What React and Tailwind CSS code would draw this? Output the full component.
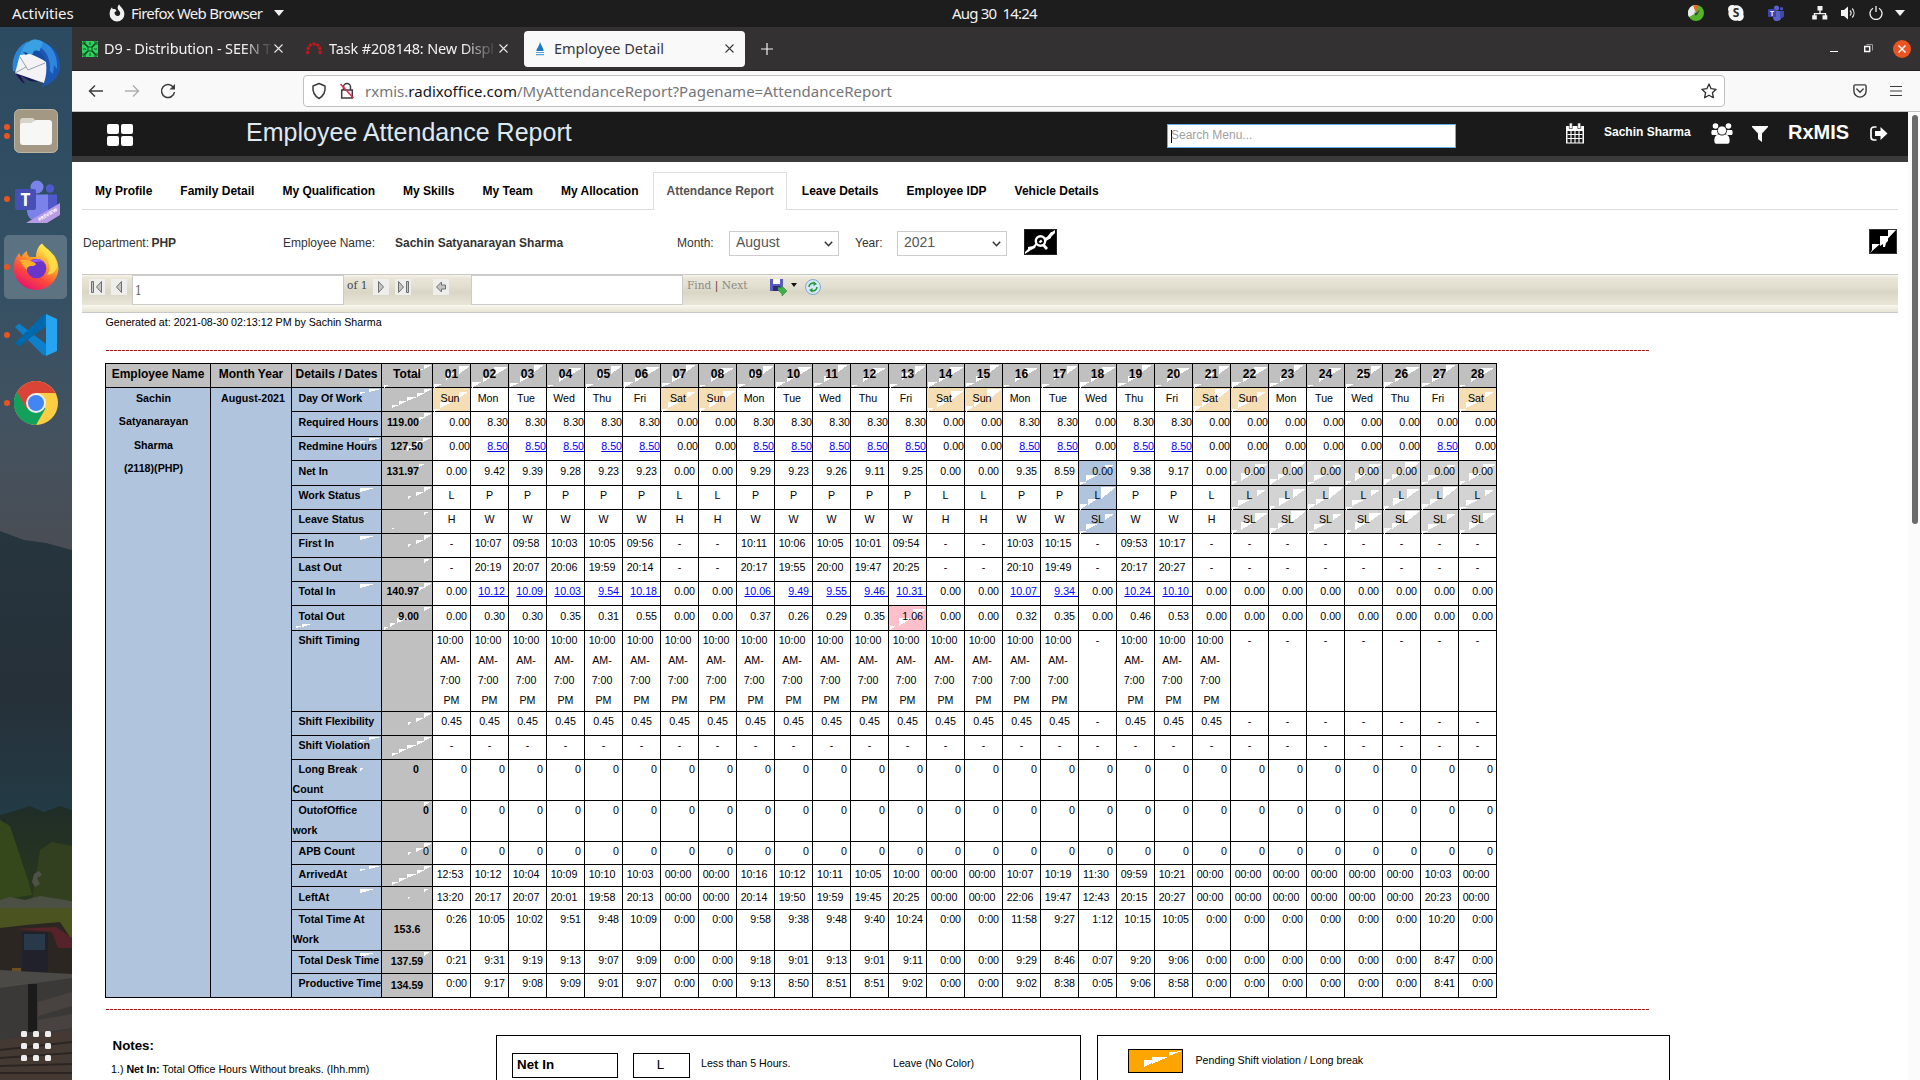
import React from "react";

const ui = "font-['Noto_Sans',sans-serif]";

/* ---------- attendance data ---------- */

const rep = (v, n) => Array(n).fill(v);
const pad = (s, v) => {
  const a = s.split(" ");
  return a.concat(rep(v, 28 - a.length));
};

const days = Array.from({ length: 28 }, (_, i) => String(i + 1).padStart(2, "0"));
const weekday = ["Sun", "Mon", "Tue", "Wed", "Thu", "Fri", "Sat"];
const dayNames = days.map((_, i) => weekday[i % 7]);

const tan = "bg-[#f5deb3]";
const blue = "bg-[#b0c4de]";
const gray = "bg-[#d3d3d3]";

const leaveTint = (i) => (i === 17 ? blue : i > 20 ? gray : "");

const rows = [
  { label: "Day Of Work", h: "h-[24px]", t: "pt-0", total: "", art: "a", tart: "a", data: dayNames, align: "cn", tint: (i) => (i % 7 === 6 || i % 7 === 0 ? tan : "") },
  { label: "Required Hours", h: "h-[25px]", t: "pt-0", total: "119.00", tpos: "r12", tart: "c", data: pad("0.00 8.30 8.30 8.30 8.30 8.30 0.00 0.00 8.30 8.30 8.30 8.30 8.30 0.00 0.00 8.30 8.30 0.00 8.30 8.30", "0.00"), align: "r" },
  { label: "Redmine Hours", h: "h-[24px]", t: "-mt-px", total: "127.50", tpos: "r9", art: "a", tart: "b", data: pad("0.00 _8.50 _8.50 _8.50 _8.50 _8.50 0.00 0.00 _8.50 _8.50 _8.50 _8.50 _8.50 0.00 0.00 _8.50 _8.50 0.00 _8.50 _8.50 0.00 0.00 0.00 0.00 0.00 0.00 _8.50 0.00", "0.00"), align: "r" },
  { label: "Net In", h: "h-[25px]", t: "pt-0", total: "131.97", tpos: "r12", tart: "d", data: pad("0.00 9.42 9.39 9.28 9.23 9.23 0.00 0.00 9.29 9.23 9.26 9.11 9.25 0.00 0.00 9.35 8.59 0.00 9.38 9.17", "0.00"), align: "rn", tint: leaveTint },
  { label: "Work Status", h: "h-[24px]", t: "-mt-px", total: "", art: "b", tart: "e", data: pad("L P P P P P L L P P P P P L L P P L P P", "L"), align: "c", tint: leaveTint },
  { label: "Leave Status", h: "h-[24px]", t: "-mt-px", total: "", tart: "f", data: pad("H W W W W W H H W W W W W H H W W SL W W H", "SL"), align: "c", tint: leaveTint },
  { label: "First In", h: "h-[24px]", t: "-mt-px", total: "", art: "b", tart: "e", data: pad("- 10:07 09:58 10:03 10:05 09:56 - - 10:11 10:06 10:05 10:01 09:54 - - 10:03 10:15 - 09:53 10:17", "-"), align: "cn" },
  { label: "Last Out", h: "h-[24px]", t: "-mt-px", total: "", tart: "g", data: pad("- 20:19 20:07 20:06 19:59 20:14 - - 20:17 19:55 20:00 19:47 20:25 - - 20:10 19:49 - 20:17 20:27", "-"), align: "cn" },
  { label: "Total In", h: "h-[24px]", t: "-mt-px", total: "140.97", tpos: "r12", art: "b", tart: "c", data: pad("0.00 _10.12 _10.09 _10.03 _9.54 _10.18 0.00 0.00 _10.06 _9.49 _9.55 _9.46 _10.31 0.00 0.00 _10.07 _9.34 0.00 _10.24 _10.10", "0.00"), align: "rn" },
  { label: "Total Out", h: "h-[25px]", t: "pt-0", total: "9.00", tpos: "r12", art: "c", tart: "h", data: pad("0.00 0.30 0.30 0.35 0.31 0.55 0.00 0.00 0.37 0.26 0.29 0.35 1.06 0.00 0.00 0.32 0.35 0.00 0.46 0.53", "0.00"), align: "rn", tint: (i) => (i === 12 ? "bg-[#ffc0cb]" : "") },
  { label: "Shift Timing", h: "h-[81px]", t: "-mt-px", total: "", data: [...rep("shift", 17), "-", ...rep("shift", 3), ...rep("-", 7)], align: "c" },
  { label: "Shift Flexibility", h: "h-[24px]", t: "-mt-px", total: "", tart: "e", data: [...rep("0.45", 17), "-", ...rep("0.45", 3), ...rep("-", 7)], align: "c" },
  { label: "Shift Violation", h: "h-[24px]", t: "-mt-px", total: "", art: "a", tart: "a", data: rep("-", 28), align: "c" },
  { label: "Long Break Count", h: "h-[41px]", t: "-mt-px", total: "0", tpos: "r12", art: "d", data: rep("0", 28), align: "rn" },
  { label: "OutofOffice work", h: "h-[41px]", t: "-mt-px", total: "0", tpos: "r2", tart: "g", data: rep("0", 28), align: "rn" },
  { label: "APB Count", h: "h-[23px]", t: "-mt-px", total: "0", tpos: "r2n", tart: "e", data: rep("0", 28), align: "rn" },
  { label: "ArrivedAt", h: "h-[22px]", t: "-mt-px", total: "", art: "a", tart: "a", data: pad("12:53 10:12 10:04 10:09 10:10 10:03 00:00 00:00 10:16 10:12 10:11 10:05 10:00 00:00 00:00 10:07 10:19 11:30 09:59 10:21 00:00 00:00 00:00 00:00 00:00 00:00 10:03", "00:00"), align: "cn" },
  { label: "LeftAt", h: "h-[23px]", t: "pt-0", total: "", art: "b", tart: "f2", data: pad("13:20 20:17 20:07 20:01 19:58 20:13 00:00 00:00 20:14 19:50 19:59 19:45 20:25 00:00 00:00 22:06 19:47 12:43 20:15 20:27 00:00 00:00 00:00 00:00 00:00 00:00 20:23", "00:00"), align: "cn" },
  { label: "Total Time At Work", h: "h-[41px]", t: "-mt-px", total: "153.6", tpos: "m", data: pad("0:26 10:05 10:02 9:51 9:48 10:09 0:00 0:00 9:58 9:38 9:48 9:40 10:24 0:00 0:00 11:58 9:27 1:12 10:15 10:05 0:00 0:00 0:00 0:00 0:00 0:00 10:20", "0:00"), align: "rn" },
  { label: "Total Desk Time", h: "h-[23px]", t: "-mt-px", total: "137.59", tpos: "m", art: "b", tart: "g", data: pad("0:21 9:31 9:19 9:13 9:07 9:09 0:00 0:00 9:18 9:01 9:13 9:01 9:11 0:00 0:00 9:29 8:46 0:07 9:20 9:06 0:00 0:00 0:00 0:00 0:00 0:00 8:47", "0:00"), align: "rn" },
  { label: "Productive Time", h: "h-[24px]", t: "-mt-px", total: "134.59", tpos: "m", data: pad("0:00 9:17 9:08 9:09 9:01 9:07 0:00 0:00 9:13 8:50 8:51 8:51 9:02 0:00 0:00 9:02 8:38 0:05 9:06 8:58 0:00 0:00 0:00 0:00 0:00 0:00 8:41", "0:00"), align: "rn" },
];

/* ---------- stepped white wedges drawn over tinted cells ---------- */

const labelWedges = {
  a: "M68 4h7l-7 2zM77 1h12l-12 3z",
  b: "M68 2h15l-15 4z",
  c: "M4 20h7l-7 2zM10 18h10l-10 3z",
  d: "M68 8h3l-3 3z",
};
const totalWedges = {
  a: "M10 17h7l-7 3zM17 13h8l-8 4zM25 9h10l-10 4zM35 5h8l-8 4zM42 1h8l-8 4z",
  b: "M25 9h9l-9 5zM34 4h9l-9 5zM41 1h8l-8 4z",
  c: "M37 5h6l-6 4zM42 1h8l-8 5z",
  d: "M37 3h6l-6 3z",
  e: "M26 10h4l-4 3zM34 6h8l-8 4zM42 1h8l-8 5z",
  f: "M42 2h5l-5 3zM10 18h2v1h-2z",
  f2: "M42 2h5l-5 3zM26 10h3l-3 2z",
  g: "M42 1h6l-6 4z",
  h: "M42 1h8l-8 4zM2 21h5l-5 3zM8 17h6l-6 4zM15 12h12l-12 5z",
};
const headWedges = [
  "M26 2h11l-11 8zM13 9h9l-9 7zM1 20h8l-8 4z",
  "M23 3h14l-14 9zM12 13h9l-9 5zM1 18h10l-10 6z",
  "M25 1h10l-10 7zM11 12h12l-12 6zM1 19h9l-9 4z",
  "M22 4h13l-13 8zM12 12h9l-9 6zM1 21h6l-6 2z",
];
const bodyWedges = [
  "M24 3h13l-13 9zM10 12h13l-13 8zM1 20h6l-6 4z",
  "M22 1h15l-15 12zM9 13h9l-9 6zM1 18h8l-8 6z",
  "M26 4h9l-9 6zM7 14h12l-12 6zM1 21h7l-7 3z",
];

function Wedges({ d, w }) {
  if (!d) return null;
  return (
    <svg className="absolute left-0 top-0" width={w} height="24" viewBox={`0 0 ${w} 24`} shapeRendering="crispEdges">
      <path d={d} fill="#fff" />
    </svg>
  );
}

function DayCell({ row, value, i }) {
  const tint = row.tint ? row.tint(i) : "";
  const link = value[0] === "_";
  const text = link ? value.slice(1) : value;
  const right = row.align[0] === "r";
  const nb = row.align[1] === "n" && text !== "-" ? "\u00a0" : "";
  return (
    <div className={`relative w-[38px] shrink-0 border-r border-b border-black ${tint}`}>
      {tint && <Wedges d={bodyWedges[(i + row.label.length) % 3]} w={37} />}
      <div className={`relative whitespace-nowrap ${row.t} ${right ? "text-right" : "text-center"}`}>
        {text === "shift" ? (
          <>
            10:00&nbsp;<br />AM-&nbsp;<br />7:00&nbsp;<br />PM
          </>
        ) : link ? (
          <a className="text-[#0000ff] underline">{text}{nb}</a>
        ) : (
          <>{text}{nb}</>
        )}
      </div>
    </div>
  );
}

const totalPos = {
  r12: "text-right pr-[13px] font-bold",
  r9: "text-right pr-[9px] font-bold",
  r2: "text-right pr-[3px] font-bold",
  r2n: "text-right pr-[3px]",
  m: "text-center font-bold -mt-[2px]",
};

function ReportTable() {
  return (
    <div className="flex w-[1392px] flex-col border-l border-t border-black text-[10.667px] leading-[20px] text-black">
      <div className="flex h-[24px] bg-[#c0c0c0] text-center text-[12px] font-bold leading-[21px]">
        <div className="w-[105px] border-r border-b border-black">Employee Name</div>
        <div className="w-[81px] border-r border-b border-black">Month Year</div>
        <div className="w-[90px] border-r border-b border-black whitespace-nowrap">Details / Dates</div>
        <div className="relative w-[51px] border-r border-b border-black">
          <Wedges d="M42 1h8l-8 4zM35 5h7l-7 4zM2 21h5l-5 3z" w={50} />
          <span className="relative">Total</span>
        </div>
        {days.map((d, i) => (
          <div key={d} className="relative w-[38px] border-r border-b border-black">
            <Wedges d={headWedges[i % 4]} w={37} />
            <span className="relative">{d}</span>
          </div>
        ))}
      </div>
      <div className="flex">
        <div className="w-[105px] border-r border-b border-black bg-[#b0c4de] pr-[9px] text-center font-bold leading-[23.33px]">
          <div className="-mt-[1px]">Sachin<br />Satyanarayan<br />Sharma<br />(2118)(PHP)</div>
        </div>
        <div className="w-[81px] border-r border-b border-black bg-[#b0c4de] pl-[4px] text-center font-bold">August-2021</div>
        <div className="flex flex-col">
          {rows.map((row) => (
            <div key={row.label} className={`flex ${row.h}`}>
              <div className="relative w-[90px] shrink-0 border-r border-b border-black bg-[#b0c4de] font-bold">
                <Wedges d={labelWedges[row.art]} w={89} />
                <div className={`relative -mr-[2px] pl-[0.500px] indent-[6px] ${row.t}`}>{row.label}</div>
              </div>
              <div className={`relative w-[51px] shrink-0 border-r border-b border-black bg-[#c0c0c0] ${row.tpos === "m" ? "flex flex-col justify-center" : ""}`}>
                <Wedges d={totalWedges[row.tart]} w={50} />
                {row.total && <div className={`relative ${totalPos[row.tpos]} ${row.tpos === "m" ? "" : row.t}`}>{row.total}</div>}
              </div>
              {row.data.map((v, i) => (
                <DayCell key={i} row={row} value={v} i={i} />
              ))}
            </div>
          ))}
        </div>
      </div>
    </div>
  );
}

/* ---------- desktop shell ---------- */

function TopBar() {
  return (
    <div className={`flex h-[27px] items-center bg-[#1d1d1d] pb-px text-[15px] leading-[26px] text-[#f2f2f2] ${ui}`}>
      <div className="ml-[12px] w-[97px] shrink-0 tracking-[-0.1px]">Activities</div>
      <svg width="16" height="18" viewBox="0 0 16 18" className="shrink-0">
        <path d="M8 17.5A7.4 7.4 0 0 1 .6 10C.6 7 1.600 4.800 3 3.200L3.600 5 6.200 4.900 7.500 7 5.500 8.300C5.500 11 7 12 8.700 12 10.700 12 11.700 10 11 8.200 10.300 6.600 8.800 5.800 8.600 4 8.500 2.400 9.300 1.200 10.300.5 10.600 2.500 15.400 4.800 15.400 10A7.400 7.400 0 0 1 8 17.500z" fill="#f0f0f0" />
      </svg>
      <div className="ml-[6px] w-[143px] shrink-0 whitespace-nowrap tracking-[-0.73px]">Firefox Web Browser</div>
      <svg width="10" height="6" viewBox="0 0 10 6"><path d="M0 0h10L5 6z" fill="#f2f2f2" /></svg>
      <div className="ml-[668px] w-[740px] shrink-0 whitespace-pre tracking-[-0.8px]">Aug 30  14:24</div>
      <div className="flex items-center">
        <svg width="16" height="16" viewBox="0 0 16 16" className="-ml-[4px]">
          <circle cx="8" cy="8" r="8" fill="#54b32a" />
          <path d="M8 8V0A8 8 0 0 0 1 12z" fill="#e9e9e9" />
          <path d="M8 8 5 .6A8 8 0 0 1 9.500.2z" fill="#f0642a" />
          <path d="M6.500 7 8 8l4-3.500L9 10l-2 .5z" fill="#444" />
        </svg>
        <svg width="16" height="16" viewBox="0 0 16 16" className="ml-[24px]">
          <path d="M0 4.500A4.500 4.500 0 0 1 6.500.4 7.500 7.500 0 0 1 15.300 9.500 4.500 4.500 0 0 1 9.500 15.600 7.500 7.500 0 0 1 .6 6.500z" fill="#f5f5f5" />
          <text x="8" y="12.200" textAnchor="middle" fontSize="12" letterSpacing="0" fontWeight="bold" fontFamily="Noto Sans" fill="#2a2a2a">S</text>
        </svg>
        <svg width="16" height="16" viewBox="0 0 16 16" className="ml-[24px]">
          <circle cx="8.500" cy="3" r="2.600" fill="#5b62c9" /><circle cx="13.500" cy="3.700" r="1.700" fill="#4a50b5" />
          <path d="M5 6h8v5a4 4 0 0 1-8 2z" fill="#5b62c9" /><path d="M12 6h4v4a2.500 2.500 0 0 1-4 2.500z" fill="#4048a8" />
          <rect x="0" y="4" width="8" height="8" rx="1" fill="#3c45b0" />
          <text x="4" y="10.500" textAnchor="middle" fontSize="7" fontWeight="bold" fontFamily="Noto Sans" fill="#e8e8ff">T</text>
        </svg>
        <svg width="16" height="14" viewBox="0 0 16 14" className="ml-[28px]" fill="#f2f2f2">
          <path d="M5.500 0h5v4.500h-5zM7.300 4h1.400v3h5.500v3h-1.300V8.200H3.100V10H1.800V7h5.500zM.2 9.300h4.600v4.200H.2zM10.500 9.300h4.800v4.200h-4.800z" />
        </svg>
        <svg width="16" height="14" viewBox="0 0 16 14" className="ml-[13px]">
          <path d="M0 4h3l4-3.500v13L3 10H0z" fill="#f2f2f2" />
          <path d="M9 4.500c1.300 1.400 1.300 3.600 0 5M11.200 2.500c2.400 2.600 2.400 6.400 0 9" fill="none" stroke="#e5e5e5" strokeWidth="1.200" />
        </svg>
        <svg width="14" height="14" viewBox="0 0 14 14" className="ml-[12px]" fill="none" stroke="#f2f2f2" strokeWidth="1.300">
          <path d="M4 2.300A6 6 0 1 0 10 2.300M7 0v6" />
        </svg>
        <svg width="10" height="6" viewBox="0 0 10 6" className="ml-[12px]"><path d="M0 0h10L5 6z" fill="#f2f2f2" /></svg>
      </div>
    </div>
  );
}

function Wallpaper() {
  return (
    <svg className="absolute inset-0" width="72" height="1053" viewBox="0 27 72 1053" preserveAspectRatio="none">
      <defs>
        <linearGradient id="sky" x1="0" y1="0" x2="0" y2="1">
          <stop offset="0" stopColor="#2c4a60" /><stop offset=".45" stopColor="#335064" />
          <stop offset=".75" stopColor="#43525f" /><stop offset="1" stopColor="#4b4c53" />
        </linearGradient>
        <linearGradient id="hill" x1="0" y1="0" x2="0" y2="1">
          <stop offset="0" stopColor="#26353e" /><stop offset=".5" stopColor="#263038" />
          <stop offset=".85" stopColor="#233b46" /><stop offset="1" stopColor="#274349" />
        </linearGradient>
        <linearGradient id="tree" x1="0" y1="0" x2="0" y2="1">
          <stop offset="0" stopColor="#1f2d28" /><stop offset="1" stopColor="#2b3a1a" />
        </linearGradient>
      </defs>
      <rect y="27" width="72" height="540" fill="url(#sky)" />
      <path d="M0 531 24 540 46 543 72 550V860H0z" fill="url(#hill)" />
      <path d="M0 815 14 811 30 806 44 812 60 806 72 810V920H0z" fill="url(#tree)" />
      <path d="M0 820 10 826 18 850 28 880 32 895 0 900z" fill="#35481c" />
      <path d="M40 850 52 842 72 846V900H32z" fill="#33401f" />
      <path d="M0 905h72v32H0z" fill="#4b5320" />
      <path d="M0 900 10 897 25 900 40 896 72 901V908H0z" fill="#4c5044" />
      <path d="M34 874l5-3 3 4-5 3 3 6-5 3-3-5z" fill="#4f5347" />
      <path d="M0 928 26 925 60 922 72 940V980H0z" fill="#2c2622" />
      <path d="M14 929 56 927 72 938V948H58L52 932z" fill="#57232b" />
      <path d="M22 932h26v43H22z" fill="#20212a" /><path d="M24 934h21v16H24z" fill="#28394a" />
      <path d="M12 968h9v8h-9z" fill="#6b4f22" />
      <path d="M0 970 72 974V982L0 1002z" fill="#4c4a46" />
      <path d="M0 988 72 978V1080H0z" fill="#3b3938" />
      <path d="M28 984h9v48h-9z" fill="#1b1b1c" />
      <path d="M38 1002 72 992v14l-34 10zM38 1020l34-6v14l-34 5z" fill="#484340" />
      <path d="M0 1040 72 1030V1080H0z" fill="#453a33" />
      <path d="M0 1050l72-8M0 1058l72-5M0 1066l72-2M0 1073h72" stroke="#2a2522" strokeWidth="2" />
    </svg>
  );
}

function DockItem({ dots = 1, active, children }) {
  return (
    <div className={`relative mx-[4px] flex h-[64px] items-center justify-center rounded-[5px] ${active ? "bg-white/20" : ""}`}>
      <div className="absolute left-0 top-0 flex h-[64px] flex-col justify-center gap-[3px]">
        {Array.from({ length: dots }, (_, i) => (
          <span key={i} className="size-[6px] rounded-full bg-[#e95420]" />
        ))}
      </div>
      {children}
    </div>
  );
}

function Dock() {
  return (
    <div className="relative flex w-[72px] shrink-0 flex-col gap-[4px] border-r border-[#27343e] pt-[4px]">
      <Wallpaper />
      <DockItem dots={0}>
        <svg width="48" height="48" viewBox="0 0 48 48">
          <path d="M16 2C4 8-1 20 1 32L8 36 10 20z" fill="#2a86d6" />
          <path d="M20 1C26 0 30 2 32 4 42 6 49 18 48 30 46 40 38 46 29 48l4-5V22L22 14 14 10z" fill="#1d57b4" />
          <path d="M28 2C40 5 46 16 45 30l-3-4-1 9-3-3-1 6C40 24 36 12 27 8z" fill="#2f86dc" />
          <path d="M20 1c5-1 8 0 11 2L26 16C20 19 14 17 8 16 10 9 14 3 20 1z" fill="#3aa0e4" />
          <path d="M22 12C28 10 32 16 34 24L20 16z" fill="#164ea6" />
          <path d="M2 32C6 38 9 43 13 45L8 36 18 42 26 43z" fill="#1f1254" />
          <path d="M8 16 18 15C24 17 30 20 34 23 35 31 34 38 32 44L3 34C5 28 6 22 8 16z" fill="#f3f3f6" />
          <path d="M8 18 16 31 33 24M3 34l11-6" fill="none" stroke="#98a2ad" strokeWidth="1" />
          <path d="M11 13l5 1-2 2z" fill="#123b7c" />
        </svg>
      </DockItem>
      <DockItem dots={2}>
        <svg width="44" height="44" viewBox="0 0 44 44">
          <rect x=".5" y=".5" width="43" height="43" rx="5" fill="#a29883" stroke="#bdb5a3" />
          <path d="M6 12a3 3 0 0 1 3-3h10l3 3h12v6H6z" fill="#d8d4c9" />
          <path d="M6 17c0-2 1-3 3-3h8l5-3h13a3 3 0 0 1 3 3v19a3 3 0 0 1-3 3H9a3 3 0 0 1-3-3z" fill="#f7f7f6" />
        </svg>
      </DockItem>
      <DockItem>
        <svg width="46" height="44" viewBox="0 0 46 44" className="ml-[2px] mt-[5px] overflow-visible">
          <circle cx="23" cy="7" r="6.500" fill="#7b83eb" /><circle cx="36" cy="8.500" r="4.200" fill="#5059c9" />
          <path d="M33 14.500h10V29a8 8 0 0 1-10 4z" fill="#5059c9" />
          <path d="M13 14.500h21V31a10.500 10.500 0 0 1-21 0z" fill="#7b83eb" />
          <rect x="1" y="9" width="21" height="21" rx="2" fill="#4650b4" />
          <text x="11.500" y="25.500" textAnchor="middle" fontSize="17" fontWeight="bold" fontFamily="Noto Sans" fill="#fff">T</text>
          <path d="M12 43 46 23V35L33 43z" fill="#b79be6" />
          <text x="0" y="0" transform="translate(25.500 41.500) rotate(-31)" fontSize="4.800" fontWeight="bold" fontFamily="Noto Sans" fill="#fff">PREVIEW</text>
        </svg>
      </DockItem>
      <DockItem active>
        <svg width="46" height="48" viewBox="0 0 46 48">
          <defs>
            <linearGradient id="fx" x1=".8" y1=".1" x2=".3" y2="1">
              <stop offset="0" stopColor="#fff44f" /><stop offset=".35" stopColor="#ffa22b" />
              <stop offset=".65" stopColor="#ff4b3a" /><stop offset="1" stopColor="#e3136e" />
            </linearGradient>
          </defs>
          <path d="M29 .5C32 6 45 10 45.500 26A22.500 22.500 0 0 1 .7 27C.5 19 3 14 6 10l2 4c2-3 4-5 6-6 0 3 1 5 3 6h6c0-5 2-11 6-13.500z" fill="url(#fx)" />
          <circle cx="23.500" cy="25.500" r="9.800" fill="#6a35c9" />
          <path d="M17 19a10 10 0 0 1 15 1c-3-2-6-2-8-1z" fill="#9059ff" />
          <path d="M7 17c3-1 11 0 15 3 2 1 0 3-3 3-4 0-5 2-5 4-3-3-5-5-7-10z" fill="#ffb02e" />
          <path d="M29 1C26 8 35 12 36 22c1 4 0 7-2 10 4 0 9-3 10-8C44 12 33 8 29 1z" fill="#ffe14a" opacity=".85" />
        </svg>
      </DockItem>
      <DockItem>
        <svg width="42" height="42" viewBox="0 0 42 42">
          <path d="M0 13 4 9.500 31 30V41.500L28 41z" fill="#0d7fcb" />
          <path d="M0 29 4 32.500 31 12V.5L28 1z" fill="#0069ad" />
          <path d="M31 0 42 5V37L31 42z" fill="#26a4f2" />
        </svg>
      </DockItem>
      <DockItem>
        <svg width="44" height="44" viewBox="0 0 44 44">
          <circle cx="22" cy="22" r="22" fill="#ffcd42" />
          <path d="M22 22 2.900 11A22 22 0 0 0 22 44l9.500-16.500z" fill="#12a05b" />
          <path d="M22 12h19.500A22 22 0 0 0 2.900 11l9.500 16.500z" fill="#da4437" />
          <circle cx="22" cy="22" r="10" fill="#f1f1f1" /><circle cx="22" cy="22" r="8" fill="#4285f4" />
        </svg>
      </DockItem>
      <div className="relative mx-auto mt-auto mb-[19px] grid grid-cols-3 gap-[6px]">
        {rep(0, 9).map((_, i) => (
          <span key={i} className="size-[6px] rounded-[1.500px] bg-[#eeeeee]" />
        ))}
      </div>
    </div>
  );
}

function Cross({ color = "#e8e8e8" }) {
  return (
    <svg width="9" height="9" viewBox="0 0 9 9" className="shrink-0">
      <path d="M.5.5l8 8M8.500.5l-8 8" stroke={color} strokeWidth="1.100" />
    </svg>
  );
}

function TabStrip() {
  return (
    <div className={`flex h-[44px] items-center border-b border-[#232122] bg-[#333132] text-[14.500px] text-[#f2f2f2] ${ui}`}>
      <svg width="16" height="16" viewBox="0 0 16 16" className="ml-[10px] shrink-0">
        <rect width="16" height="16" fill="#2fd160" />
        <path d="M2 2l4 4M14 2l-4 4M2 14l4-4M14 14l-4-4" stroke="#0a3d18" strokeWidth="1.600" />
        <path d="M8 1v3M8 12v3M1 8h3M12 8h3M6 6h4v4H6zM1 4V1h3M12 1h3v3M1 12v3h3M12 15h3v-3" stroke="#10531f" strokeWidth="1" fill="none" />
      </svg>
      <div className="ml-[6px] mt-px w-[169px] shrink-0 whitespace-nowrap tracking-[-0.15px] [mask-image:linear-gradient(90deg,#000_82%,transparent_100%)]">D9 - Distribution - SEEN T</div>
      <div className="ml-[1px]"><Cross /></div>
      <svg width="16" height="13" viewBox="0 0 16 13" className="ml-[23px] shrink-0" fill="none">
        <path d="M2 12C1 5 4 2 8 2s7 3 6 10" stroke="#c9141c" strokeWidth="3" strokeDasharray="3 1" />
      </svg>
      <div className="ml-[7px] mt-px w-[168px] shrink-0 whitespace-nowrap tracking-[-0.15px] [mask-image:linear-gradient(90deg,#000_80%,transparent_100%)]">Task #208148: New Displ</div>
      <div className="ml-[2px]"><Cross /></div>
      <div className="ml-[16px] flex h-[36px] w-[221px] shrink-0 items-center rounded-[4px] bg-[#f9f9fa] text-[#37373d]">
        <svg width="10" height="14" viewBox="0 0 10 14" className="ml-[11px]">
          <path d="M5 0C6 3 9 7 8.500 9H1.500C1 7 4 5 5 0z" fill="#1d78c1" /><path d="M1 10h8v1H1zM1 12h8v1.300H1z" fill="#5aa0d8" />
        </svg>
        <div className="ml-[9px] mt-px w-[171px]">Employee Detail</div>
        <Cross color="#3a3a3a" />
      </div>
      <svg width="12" height="12" viewBox="0 0 12 12" className="ml-[16px] shrink-0"><path d="M6 0v12M0 6h12" stroke="#f2f2f2" strokeWidth="1.200" /></svg>
      <div className="ml-auto flex items-center">
        <div className="mt-[5px] h-px w-[8px] bg-white" />
        <svg width="9" height="9" viewBox="0 0 9 9" className="ml-[26px] mr-[20px]" fill="none">
          <path d="M.7 2.500h5v5h-5z" stroke="#fff" strokeWidth="1.400" /><path d="M2.500.5h6v6" stroke="#999" />
        </svg>
        <div className="mr-[9px] flex size-[18px] items-center justify-center rounded-full bg-[#e95420]">
          <svg width="8" height="8" viewBox="0 0 8 8"><path d="M.5.5l7 7M7.500.5l-7 7" stroke="#fff" strokeWidth="1.500" /></svg>
        </div>
      </div>
    </div>
  );
}

function AddressBar() {
  return (
    <div className="flex h-[41px] items-center border-b border-[#c3c3c4] bg-[#f9f9fa]">
      <svg width="90" height="18" viewBox="0 0 90 18" className="ml-[16px] shrink-0" fill="none" strokeWidth="1.500">
        <path d="M15 9H1.500M7 3.500 1.500 9 7 14.500" stroke="#3c3c3e" />
        <path d="M37 9h13.500M45 3.500 50.500 9 45 14.500" stroke="#b0b0b2" />
        <path d="M85.500 5.500A6.500 6.500 0 1 0 86.500 10" stroke="#3c3c3e" /><path d="M87 2v5.500h-5.500z" fill="#3c3c3e" />
      </svg>
      <div className="ml-[125px] flex h-[32px] w-[1422px] shrink-0 items-center rounded-[4px] border border-[#c0c0c3] bg-white">
        <svg width="16" height="18" viewBox="0 0 16 18" className="ml-[7px]" fill="none" stroke="#3c3c3e" strokeWidth="1.500">
          <path d="M8 1.500 14 4c.6 5-1 9.500-6 12.500C3 13.500 1.400 9 2 4z" strokeLinejoin="round" />
        </svg>
        <svg width="16" height="18" viewBox="0 0 16 18" className="ml-[12px]" fill="none">
          <path d="M4.500 8V5a3.500 3.500 0 0 1 7 0v3M2.700 8h10.600v8H2.700z" stroke="#3c3c3e" strokeWidth="1.500" />
          <path d="M1.500 2l13 14" stroke="#e22850" strokeWidth="1.500" />
        </svg>
        <div className={`ml-[10px] text-[15px] tracking-[0.02px] text-[#75757a] ${ui}`}>
          rxmis.<span className="text-[#15141a]">radixoffice.com</span>/MyAttendanceReport?Pagename=AttendanceReport
        </div>
        <svg width="16" height="16" viewBox="0 0 16 16" className="ml-auto mr-[7px]" fill="none" stroke="#2c2c2e" strokeWidth="1.300" strokeLinejoin="round">
          <path d="M8 1l2.100 4.700 5 .6-3.700 3.400 1 5L8 12.200 3.600 14.700l1-5L.9 6.300l5-.6z" />
        </svg>
      </div>
      <svg width="14" height="14" viewBox="0 0 14 14" className="ml-auto shrink-0" fill="none" stroke="#3c3c3e" strokeWidth="1.400">
        <path d="M2.200.9h9.600c.8 0 1.300.5 1.300 1.300V7a6.100 6.100 0 0 1-12.200 0V2.200C.9 1.400 1.400.9 2.200.9z" /><path d="M3.800 5 7 8.200 10.200 5" strokeLinecap="round" />
      </svg>
      <svg width="12" height="12" viewBox="0 0 12 12" className="ml-[23px] mr-[18px] shrink-0"><path d="M0 1.500h12M0 6h12M0 10.500h12" stroke="#3c3c3e" strokeWidth="1.200" /></svg>
    </div>
  );
}

/* ---------- page ---------- */

function SiteHeader() {
  return (
    <div className="flex h-[50px] w-[1836px] border-b-[6px] border-[#3a3a3a] bg-[#1a1a1a] text-white">
      <svg width="26" height="22" viewBox="0 0 26 22" className="ml-[35px] mt-[12px] shrink-0" fill="#fff">
        <rect width="12" height="10" rx="2" /><rect x="14" width="12" height="10" rx="2" />
        <rect y="12" width="12" height="10" rx="2" /><rect x="14" y="12" width="12" height="10" rx="2" />
      </svg>
      <div className="ml-[113px] w-[921px] shrink-0 whitespace-nowrap text-[25px] leading-[40px] tracking-[0.02px] text-[#dfe9f3]">Employee Attendance Report</div>
      <div className="mt-[12px] flex h-[24px] w-[289px] shrink-0 border border-[#66afe9] bg-white pl-[3px] text-[12px] leading-[20px] text-[#a0a0a0]">
        <span className="mt-[5px] -mr-px h-[13px] w-px bg-black" />
        <span>Search Menu...</span>
      </div>
      <svg width="20" height="21" viewBox="0 0 20 21" className="ml-[109px] mt-[11px] shrink-0">
        <path d="M1 3h18v17.500H1z" fill="#fff" />
        <path d="M2.500 8h15v11.500h-15z" fill="#1a1a1a" />
        <path d="M2.500 11.500h15M2.500 15.500h15M6 8v12M10 8v12M14 8v12" stroke="#fff" strokeWidth="1.100" />
        <path d="M4.300 0h3v5.500h-3zM12.700 0h3v5.500h-3z" fill="#fff" stroke="#1a1a1a" strokeWidth=".6" />
      </svg>
      <div className="ml-[19px] w-[107px] shrink-0 text-[12px] font-bold leading-[40px]">Sachin Sharma</div>
      <svg width="22" height="21" viewBox="0 0 22 21" className="mt-[11px] shrink-0" fill="#fff">
        <circle cx="4.500" cy="3" r="2.800" /><circle cx="17.500" cy="3" r="2.800" />
        <path d="M1 7h6.500l-1 5H1.500C.2 12 0 8.500 1 7zM21 7h-6.500l1 5h5c1.300 0 1.500-3.500.5-5z" />
        <path d="M6.500 11.500h9c3 1.500 3.500 5 3 7.500-.2 1.200-1 1.800-2 1.800h-11c-1 0-1.800-.6-2-1.800-.5-2.500 0-6 3-7.500z" />
        <circle cx="11" cy="7.500" r="4.600" stroke="#1a1a1a" strokeWidth=".9" />
      </svg>
      <svg width="16" height="16" viewBox="0 0 16 16" className="ml-[19px] mt-[14px] shrink-0" fill="#fff"><path d="M0 0h16v1L10 7.500V16l-4-3V7.500L0 1z" /></svg>
      <div className="ml-[20px] w-[82px] shrink-0 text-[20px] font-bold leading-[41px]">RxMIS</div>
      <svg width="18" height="15" viewBox="0 0 18 15" className="mt-[14px] shrink-0">
        <path d="M6.500 1H4a3 3 0 0 0-3 3v7a3 3 0 0 0 3 3h2.500" fill="none" stroke="#fff" strokeWidth="1.700" />
        <path d="M5 5h5.500V1L17.500 7.500 10.500 14v-4H5z" fill="#fff" />
      </svg>
    </div>
  );
}

const navTabs = ["My Profile", "Family Detail", "My Qualification", "My Skills", "My Team", "My Allocation", "Attendance Report", "Leave Details", "Employee IDP", "Vehicle Details"];

function PageTabs() {
  return (
    <div className="ml-[10px] mt-[10px] flex h-[38px] w-[1816px] border-b border-[#ddd] text-[12px] font-bold leading-[36px]">
      {navTabs.map((t) =>
        t === "Attendance Report" ? (
          <div key={t} className="-mb-px ml-px mr-px h-[38px] border border-b-0 border-[#ddd] bg-white px-[12px] text-[#555] ">{t}</div>
        ) : (
          <div key={t} className="ml-px mr-[1px] mt-px px-[13px] text-black first:ml-0">{t}</div>
        )
      )}
    </div>
  );
}

function SelectBox({ value }) {
  return (
    <div className="flex h-[25px] w-[110px] shrink-0 items-center border border-[#ccc] bg-white pl-[6px] pr-[5px] text-[14px] leading-[20px] text-[#555]">
      <span className="-mt-[3px]">{value}</span>
      <svg width="9" height="6" viewBox="0 0 9 6" className="ml-auto"><path d="M.8.8 4.500 4.700 8.200.8" fill="none" stroke="#333" strokeWidth="1.500" /></svg>
    </div>
  );
}

function Filters() {
  return (
    <div className="ml-[11px] mt-[19px] flex h-[26px] text-[12px] leading-[29px] text-[#333]">
      <div className="w-[200px] shrink-0">Department: <b className="-ml-[1px]">PHP</b></div>
      <div className="w-[112px] shrink-0">Employee Name:</div>
      <div className="w-[282px] shrink-0 font-bold">Sachin Satyanarayan Sharma</div>
      <div className="w-[52px] shrink-0">Month:</div>
      <div className="mt-[2px]"><SelectBox value="August" /></div>
      <div className="ml-[16px] w-[42px] shrink-0">Year:</div>
      <div className="mt-[2px]"><SelectBox value="2021" /></div>
      <svg width="33" height="26" viewBox="0 0 33 26" className="ml-[17px] shrink-0">
        <rect x=".5" y=".5" width="32" height="25" stroke="#222" />
        <circle cx="16.500" cy="12" r="4.700" fill="none" stroke="#fff" strokeWidth="2.400" />
        <path d="M19 15.500l4 4.500" stroke="#fff" strokeWidth="2.800" />
        <path d="M31 1v3L27 8v1l-5 3-2-3 3-1 4-5h1zM13 15l-2 4-4 2-6 4V23l3-3v-2l5-1 3-3z" fill="#fff" />
        <path d="M14.500 13l2.500-2.500 1.500 2-2 1.500z" fill="#fff" />
      </svg>
      <svg width="28" height="25" viewBox="0 0 28 25" className="ml-[812px] shrink-0">
        <rect x=".5" y=".5" width="27" height="24" stroke="#333" />
        <path d="M19 1h8L19 9.500zM11 7h8v5l-2 2-1 4h-2v-3l-3 2zM3 15h8L1 24l2-3z" fill="#fff" />
      </svg>
    </div>
  );
}

function ToolGlyph({ d, ml }) {
  return (
    <svg width="16" height="16" viewBox="0 0 16 16" className={`mt-[4px] shrink-0 ${ml}`}>
      <rect width="16" height="16" fill="#eeeeec" />
      <path d={d} fill="#c4c4c4" stroke="#6e6e6e" />
    </svg>
  );
}

function ReportToolbar() {
  return (
    <div className="ml-[10px] mt-[19px] h-[39px] w-[1816px] border-y border-[#c9c9c6] bg-[#ece9d8] font-['DejaVu_Serif_Condensed','DejaVu_Serif',serif] text-[11.800px] leading-[20px] text-[#444]">
      <div className="flex h-[30px] bg-[linear-gradient(#f6f3e8_0,#e8e5d6_12%,#e3e0d1_35%,#d9d6c6_58%,#e0ddce_75%,#e9e6d8_100%)]">
        <ToolGlyph ml="ml-[7px]" d="M2.500 2.500h2v11h-2zM12.500 2.500v11L7.500 8z" />
        <ToolGlyph ml="ml-[6px]" d="M10.500 2.500v11L5.500 8z" />
        <div className="ml-[5px] w-[212px] shrink-0 border border-[#ccc] bg-white pl-[2px] text-[12px] leading-[30px] text-[#666]">1</div>
        <div className="ml-[3px] w-[26px] shrink-0 whitespace-nowrap">of 1</div>
        <ToolGlyph ml="" d="M5.500 2.500v11l5-5.500z" />
        <ToolGlyph ml="ml-[6px]" d="M3.500 2.500v11l5-5.500zM11.500 2.500h2v11h-2z" />
        <ToolGlyph ml="ml-[22px]" d="M3.500 8l5-5v3h4v4h-4v3z" />
        <div className="ml-[22px] w-[212px] shrink-0 border border-[#ccc] bg-white" />
        <div className="ml-[4px] w-[63px] shrink-0 whitespace-pre text-[#8a8a86]">Find <span className="text-[#5a3a2a]">|</span> Next</div>
        <svg width="17" height="17" viewBox="0 0 17 17" className="ml-[20px] mt-[4px] shrink-0">
          <path d="M0 0h13v12H0z" fill="#5a5bc0" /><path d="M3 0h7v5H3z" fill="#fff" /><path d="M3 7h7v5H3z" fill="#2c2d70" />
          <path d="M8 8l3 1 1-2 5 5-5 5v-2l-4-4z" fill="#3fae49" stroke="#1f7c2a" strokeWidth=".5" />
        </svg>
        <svg width="6" height="4" viewBox="0 0 6 4" className="ml-[4px] mt-[8px]"><path d="M0 0h6L3 4z" fill="#111" /></svg>
        <svg width="16" height="16" viewBox="0 0 16 16" className="ml-[8px] mt-[4px] shrink-0">
          <circle cx="8" cy="8" r="7.500" fill="#d5e9f8" stroke="#7fa8cf" />
          <path d="M4 8c0-3 3-4.500 5-3.500M12 8c0 3-3 4.500-5 3.500" fill="none" stroke="#2c9b3a" strokeWidth="1.600" />
          <path d="M8.500 2.200 12 5 8.500 7zM7.500 13.800 4 11l3.500-2z" fill="#2c9b3a" />
        </svg>
      </div>
      <div className="h-[7px] bg-[linear-gradient(#faf8ee,#e7e4d5)]" />
    </div>
  );
}

function DashedRule() {
  return <div className="h-px w-[1543px] bg-[repeating-linear-gradient(90deg,#a01c1c_0_3px,#e8bcbc_3px_4px)]" />;
}

function Legend() {
  return (
    <div className="mt-[25px] flex h-[46px] text-[10.667px] leading-[20px] text-black">
      <div className="w-[391px] shrink-0 pl-[6px]">
        <div className="mt-px pl-[1.500px] text-[13.333px] font-bold">Notes:</div>
        <div className="mt-[3px]">1.) <b>Net In:</b> Total Office Hours Without breaks. (Ihh.mm)</div>
      </div>
      <div className="flex w-[585px] shrink-0 border border-b-0 border-black">
        <div className="ml-[15px] mt-[17px] h-[25px] w-[106px] border border-black pl-[4px] text-[13.333px] font-bold leading-[22px]">Net In</div>
        <div className="ml-[15px] mt-[17px] h-[25px] w-[57px] border border-black pr-[2px] text-center text-[13.333px] leading-[22px]">L</div>
        <div className="ml-[11px] mt-[17px] w-[192px]">Less than 5 Hours.</div>
        <div className="mt-[17px]">Leave (No Color)</div>
      </div>
      <div className="ml-[16px] flex w-[573px] shrink-0 border border-b-0 border-black">
        <div className="ml-[30px] mt-[13px] h-[24px] w-[55px] border border-black bg-[#ffa500]">
          <svg width="53" height="22" viewBox="0 0 53 22" shapeRendering="crispEdges"><path d="M40 2h8V1h5L40 6zM23 7h16l-16 7zM15 10h15L15 17z" fill="#fff" /></svg>
        </div>
        <div className="ml-[12.500px] mt-[14px]">Pending Shift violation / Long break</div>
      </div>
    </div>
  );
}

export default function App() {
  return (
    <div className="flex h-[1080px] w-[1920px] flex-col overflow-hidden bg-white font-['Liberation_Sans',Arial,sans-serif]">
      <TopBar />
      <div className="flex min-h-0 flex-1">
        <Dock />
        <div className="flex min-w-0 flex-1 flex-col overflow-hidden">
          <TabStrip />
          <AddressBar />
          <div className="flex min-h-0 flex-1">
            <div className="w-[1836px] shrink-0">
              <SiteHeader />
              <PageTabs />
              <Filters />
              <ReportToolbar />
              <div className="ml-[33px] mt-[-1px]">
                <div className="h-[38px] pl-[0.500px] text-[10.667px] leading-[20px] text-black">Generated at: 2021-08-30 02:13:12 PM by Sachin Sharma</div>
                <div className="ml-px"><DashedRule /></div>
                <div className="mt-[12px]"><ReportTable /></div>
                <div className="ml-px mt-[11px]"><DashedRule /></div>
                <Legend />
              </div>
            </div>
            <div className="flex flex-1 justify-center bg-[#fbfbfb] pl-[1px] pt-[3px]">
              <div className="h-[409px] w-[6px] rounded-full bg-[#6b6b6b]" />
            </div>
          </div>
        </div>
      </div>
    </div>
  );
}
